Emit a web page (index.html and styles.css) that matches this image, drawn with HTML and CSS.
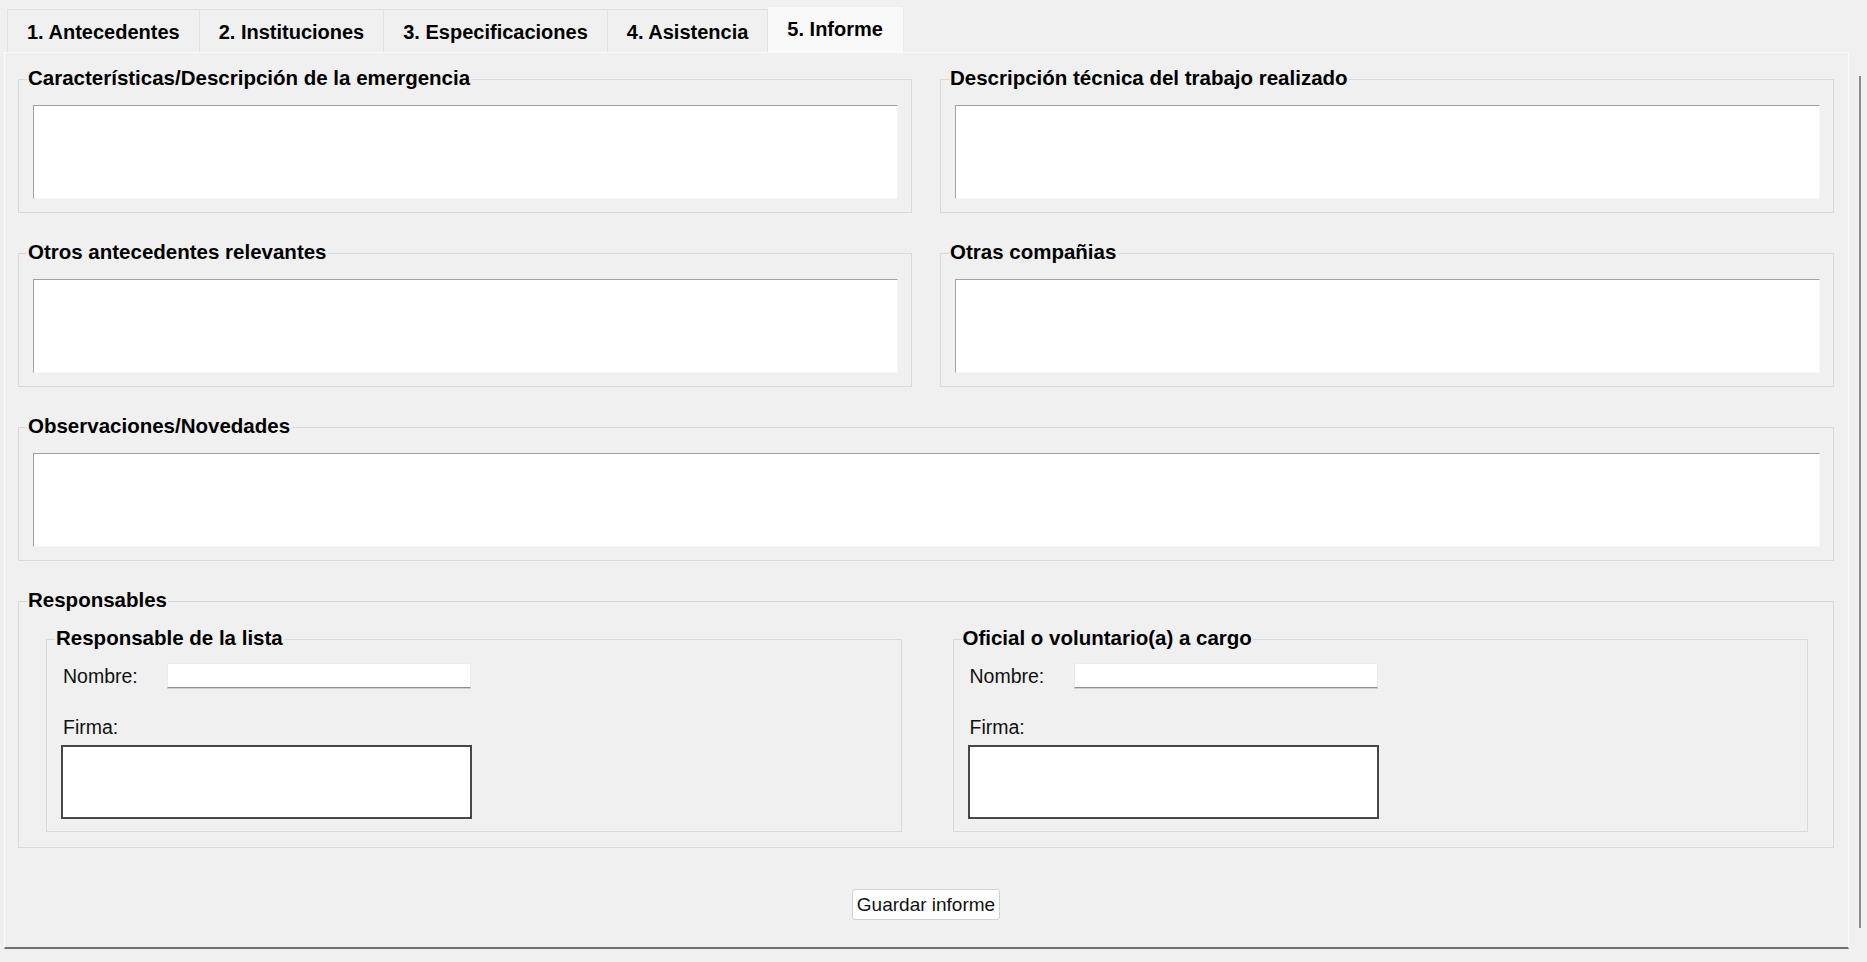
FILE: index.html
```html
<!DOCTYPE html>
<html lang="es">
    <head>
        <meta charset="utf-8">
        <title>Informe</title>
        <link rel="stylesheet" href="styles.css">
    </head>
    <body>
        <div class="notebook">
            <div class="tabs">
                <span class="tab">1. Antecedentes</span>
                <span class="tab">2. Instituciones</span>
                <span class="tab">3. Especificaciones</span>
                <span class="tab">4. Asistencia</span>
                <span class="tab tab-active">5. Informe</span>
            </div>
            <div class="panel">
                <div class="row row-2">
                    <fieldset class="group">
                        <legend>Características/Descripción de la emergencia</legend>
                        <textarea class="text-box"></textarea>
                    </fieldset>
                    <fieldset class="group">
                        <legend>Descripción técnica del trabajo realizado</legend>
                        <textarea class="text-box"></textarea>
                    </fieldset>
                </div>
                <div class="row row-2">
                    <fieldset class="group">
                        <legend>Otros antecedentes relevantes</legend>
                        <textarea class="text-box"></textarea>
                    </fieldset>
                    <fieldset class="group">
                        <legend>Otras compañias</legend>
                        <textarea class="text-box"></textarea>
                    </fieldset>
                </div>
                <div class="row">
                    <fieldset class="group">
                        <legend>Observaciones/Novedades</legend>
                        <textarea class="text-box"></textarea>
                    </fieldset>
                </div>
                <fieldset class="group group-outer">
                    <legend>Responsables</legend>
                    <div class="people">
                        <fieldset class="group person">
                            <legend>Responsable de la lista</legend>
                            <div class="name-row">
                                <label class="name-label">Nombre:</label>
                                <input class="name-input" type="text">
                            </div>
                            <div class="sign-label">Firma:</div>
                            <div class="sign-box"></div>
                        </fieldset>
                        <fieldset class="group person">
                            <legend>Oficial o voluntario(a) a cargo</legend>
                            <div class="name-row">
                                <label class="name-label">Nombre:</label>
                                <input class="name-input" type="text">
                            </div>
                            <div class="sign-label">Firma:</div>
                            <div class="sign-box"></div>
                        </fieldset>
                    </div>
                </fieldset>
                <div class="actions">
                    <button class="save-btn" type="button">Guardar informe</button>
                </div>
            </div>
        </div>
        <div class="scroll-track">
            <div class="scroll-line"></div>
        </div>
    </body>
</html>
```

FILE: styles.css
```css
html, body {
    margin: 0;
    padding: 0;
}
body {
    display: flex;
    height: 100vh;
    overflow: hidden;
    background-color: #f0f0f0;
    font-family: "Liberation Sans", Arial, sans-serif;
    color: #000;
}
.notebook {
    margin-left: 4px;
    width: 1845px;
    display: flex;
    flex-direction: column;
}
.tabs {
    height: 52px;
    display: flex;
    align-items: flex-end;
    padding-left: 3px;
    box-sizing: border-box;
}
.tab {
    height: 43px;
    box-sizing: border-box;
    padding: 11px 19px 0 19px;
    line-height: 22px;
    font-size: 20px;
    font-weight: bold;
    background-color: #f0f0f0;
    border: 1px solid #e2e2e2;
    border-bottom: none;
    border-left: none;
}
.tab:first-child {
    border-left: 1px solid #e2e2e2;
}
.tab-active {
    height: 46px;
    padding: 11px 20px 0 19px;
    background-color: #f9f9f9;
    border-color: #ececec;
}
.panel {
    height: 897px;
    box-sizing: border-box;
    padding: 14px 14px 27px 13px;
    border: 1px solid #fafafa;
    border-bottom: 2px solid #707070;
    display: flex;
    flex-direction: column;
    gap: 28px;
}
.row {
    display: grid;
    grid-template-columns: 1fr;
}
.row-2 {
    grid-template-columns: 1fr 1fr;
    column-gap: 28px;
}
.group {
    margin: 0;
    min-width: 0;
    padding: 14px 13px 13px 14px;
    border: 1px solid #d9d9d9;
}
.group legend {
    padding: 0 1px 2px 1px;
    margin-left: -6px;
    font-size: 20.5px;
    line-height: 22px;
    font-weight: bold;
}
.text-box {
    display: block;
    width: 100%;
    height: 94px;
    box-sizing: border-box;
    margin: 0;
    padding: 2px 4px;
    resize: none;
    background-color: #fff;
    border: 1px solid;
    border-color: #a2a2a2 #f7f7f7 #f7f7f7 #a2a2a2;
    outline: none;
    font-family: "Liberation Sans", Arial, sans-serif;
    font-size: 19px;
}
.group-outer {
    padding: 14px 25px 15px 27px;
}
.group-outer > legend {
    margin-left: -19px;
}
.people {
    display: grid;
    grid-template-columns: 1fr 1fr;
    column-gap: 51px;
}
.person {
    padding: 12px 14px 12px 14px;
}
.name-row {
    display: flex;
    align-items: center;
    padding-left: 2px;
}
.name-label {
    width: 104px;
    font-size: 19.5px;
    line-height: 22px;
    color: #111;
}
.name-input {
    width: 304px;
    height: 25px;
    box-sizing: border-box;
    margin: 0;
    padding: 0 4px;
    background-color: #fff;
    border: 1px solid #ebebeb;
    border-bottom: 1px solid #8f8f8f;
    box-shadow: 0 1px 0 #cfcfcf;
    outline: none;
    font-size: 19px;
}
.sign-label {
    margin-top: 28px;
    padding-left: 2px;
    font-size: 19.5px;
    line-height: 22px;
    color: #111;
}
.sign-box {
    margin-top: 7px;
    width: 411px;
    height: 74px;
    box-sizing: border-box;
    background-color: #fff;
    border: 2px solid #474747;
}
.actions {
    margin-top: 13px;
    display: flex;
    justify-content: center;
}
.save-btn {
    height: 31px;
    margin: 0;
    padding: 0 4px;
    background-color: #fff;
    border: 1px solid #d2d2d2;
    border-radius: 3px;
    font-family: "Liberation Sans", Arial, sans-serif;
    font-size: 19px;
    color: #111;
}
.scroll-track {
    width: 18px;
}
.scroll-line {
    margin-top: 76px;
    margin-left: 10px;
    width: 2px;
    height: 852px;
    background-color: #8a8a8a;
}
```
